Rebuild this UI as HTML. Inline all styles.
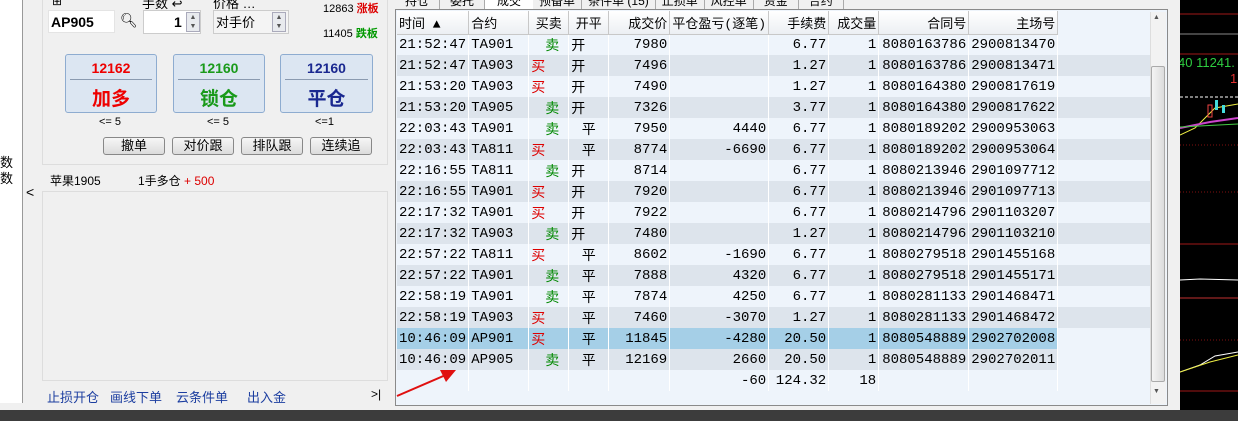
<!DOCTYPE html>
<html><head><meta charset="utf-8"><style>
*{box-sizing:border-box;margin:0;padding:0}
body{width:1238px;height:421px;overflow:hidden;background:#f0f0f0;font-family:"Liberation Sans","Noto Sans CJK SC",sans-serif;font-size:12px;position:relative;color:#000}
.a{position:absolute}
.mono{font-family:"Liberation Mono","Noto Sans CJK SC",monospace;font-size:14px}
.bb{position:absolute;background:#dce6f2;border:1px solid #8eacd0;border-radius:3px;text-align:center}
.bb .p{font-size:14px;font-weight:bold;margin-top:5px;height:19px}
.bb hr{border:0;border-top:1px solid #8a9ab0;margin:0 4px}
.bb .l{font-size:19px;font-weight:bold;margin-top:4px}
.sb{position:absolute;top:137px;height:18px;width:62px;border:1px solid #888;border-radius:3px;background:linear-gradient(#f6f6f6,#dcdcdc);text-align:center;font-size:13px;line-height:16px}
table{border-collapse:collapse;position:absolute;left:397px;top:11px;table-layout:fixed}
td,th{height:21px;padding:0 2px;white-space:nowrap;overflow:hidden;border-right:1px solid #fff}
th{font-weight:normal;font-size:13px;background:linear-gradient(#fff,#eceff3);border-right:1px solid #c8c8c8;border-bottom:1px solid #c8c8c8;height:23px}
tr.o td{background:#eef4fb}
tr.e td{background:#dde4ec}
tr.h td{background:#a5cfe7}
tr.z td{background:#eef4fb}
.r{text-align:right}.c{text-align:center}
.buy{color:#d00;font-family:"Noto Sans CJK SC",sans-serif;font-size:14px}
.sell{color:#080;font-family:"Noto Sans CJK SC",sans-serif;font-size:14px;padding-left:16px}
.k{font-family:"Noto Sans CJK SC",sans-serif;font-size:14px}
.lk{position:absolute;top:387px;color:#1c3ea0;font-size:13px}
</style></head><body>
<!-- left white strip -->
<div class="a" style="left:0;top:0;width:23px;height:403px;background:#fff;border-right:1px solid #999"></div>
<div class="a" style="left:0;top:152px;font-size:13px">数</div>
<div class="a" style="left:0;top:168px;font-size:13px">数</div>
<div class="a" style="left:26px;top:184px;font-size:14px">&lt;</div>
<!-- top box -->
<div class="a" style="left:42px;top:-2px;width:346px;height:167px;border:1px solid #ddd;background:#f0f0f0"></div>
<div class="a" style="left:52px;top:-6px;font-size:12px">⊞</div>
<div class="a" style="left:142px;top:-7px;font-size:13px">手数 ↩</div>
<div class="a" style="left:213px;top:-7px;font-size:13px">价格 …</div>
<div class="a" style="left:48px;top:10px;width:67px;height:23px;background:#fff;border:1px solid #e4e4e4;font-weight:bold;font-size:14px;padding:3px 2px">AP905</div>
<div class="a" style="left:120px;top:12px;font-size:14px">🔍︎</div>
<div class="a" style="left:143px;top:10px;width:58px;height:24px;background:#fff;border:1px solid #ccc;font-weight:bold;font-size:14px;padding:3px 0 0 30px">1<div class="a" style="left:42px;top:1px;width:14px;height:20px;background:#e8eaee;border:1px solid #aab;font-size:7px;line-height:9px;text-align:center;color:#555">▲<br>▼</div></div>
<div class="a" style="left:213px;top:10px;width:76px;height:24px;background:#f4f4f4;border:1px solid #ccc;font-size:13px;padding:1px 2px">对手价<div class="a" style="left:58px;top:1px;width:14px;height:20px;background:#e8eaee;border:1px solid #aab;font-size:7px;line-height:9px;text-align:center;color:#555">▲<br>▼</div></div>
<div class="a" style="left:323px;top:0;font-size:11px">12863 <b style="color:#d00">涨板</b></div>
<div class="a" style="left:323px;top:25px;font-size:11px">11405 <b style="color:#090">跌板</b></div>
<div class="bb" style="left:65px;top:54px;width:92px;height:59px"><div class="p" style="color:#e00">12162</div><hr><div class="l" style="color:#e00">加多</div></div>
<div class="bb" style="left:173px;top:54px;width:92px;height:59px"><div class="p" style="color:#1a9a1a">12160</div><hr><div class="l" style="color:#1a9a1a">锁仓</div></div>
<div class="bb" style="left:280px;top:54px;width:93px;height:59px"><div class="p" style="color:#1a2890">12160</div><hr><div class="l" style="color:#1a2890">平仓</div></div>
<div class="a" style="left:99px;top:116px;font-size:11px">&lt;= 5</div>
<div class="a" style="left:207px;top:116px;font-size:11px">&lt;= 5</div>
<div class="a" style="left:315px;top:116px;font-size:11px">&lt;=1</div>
<div class="sb" style="left:103px">撤单</div>
<div class="sb" style="left:172px">对价跟</div>
<div class="sb" style="left:241px">排队跟</div>
<div class="sb" style="left:310px">连续追</div>
<div class="a" style="left:50px;top:172px;font-size:12px">苹果1905</div>
<div class="a" style="left:138px;top:172px;font-size:12px">1手多仓 <span style="color:#d00">+ 500</span></div>
<div class="a" style="left:42px;top:191px;width:346px;height:190px;border:1px solid #ddd;background:#f0f0f0"></div>
<div class="lk" style="left:47px">止损开仓</div>
<div class="lk" style="left:110px">画线下单</div>
<div class="lk" style="left:176px">云条件单</div>
<div class="lk" style="left:247px">出入金</div>
<div class="a" style="left:371px;top:387px;font-size:12px">&gt;|</div>
<!-- tabs -->
<div class="a" style="left:395px;top:-8px;height:16px;width:480px;font-size:12px;white-space:nowrap">
<span style="display:inline-block;padding:0 10px;border-right:1px solid #aaa">持仓</span><span style="display:inline-block;padding:0 10px;border-right:1px solid #aaa">委托</span><span style="display:inline-block;padding:0 12px;background:#fff">成交</span><span style="display:inline-block;padding:0 6px;border-right:1px solid #aaa">预备单</span><span style="display:inline-block;padding:0 6px;border-right:1px solid #aaa">条件单 (15)</span><span style="display:inline-block;padding:0 6px;border-right:1px solid #aaa">止损单</span><span style="display:inline-block;padding:0 6px;border-right:1px solid #aaa">风控单</span><span style="display:inline-block;padding:0 10px;border-right:1px solid #aaa">资金</span><span style="display:inline-block;padding:0 10px;border-right:1px solid #aaa">合约</span></div>
<!-- table frame -->
<div class="a" style="left:395px;top:9px;width:773px;height:397px;background:#eef4fb;border:1px solid #8a8a8a"></div>
<table class="mono">
<colgroup><col style="width:71px"><col style="width:60px"><col style="width:40px"><col style="width:40px"><col style="width:61px"><col style="width:99px"><col style="width:60px"><col style="width:50px"><col style="width:90px"><col style="width:80px"><col style="width:101px"></colgroup>
<tr><th style="text-align:left">时间 ▲</th><th style="text-align:left">合约</th><th>买卖</th><th>开平</th><th class="r">成交价</th><th class="c">平仓盈亏(逐笔)</th><th class="r">手续费</th><th class="r">成交量</th><th class="r">合同号</th><th class="r">主场号</th><th style="background:#eef4fb;border:0"></th></tr>
<tr class="o"><td>21:52:47</td><td>TA901</td><td class="sell">卖</td><td class="k">开</td><td class="r">7980</td><td></td><td class="r">6.77</td><td class="r">1</td><td class="r">8080163786</td><td>2900813470</td><td></td></tr>
<tr class="e"><td>21:52:47</td><td>TA903</td><td class="buy">买</td><td class="k">开</td><td class="r">7496</td><td></td><td class="r">1.27</td><td class="r">1</td><td class="r">8080163786</td><td>2900813471</td><td></td></tr>
<tr class="o"><td>21:53:20</td><td>TA903</td><td class="buy">买</td><td class="k">开</td><td class="r">7490</td><td></td><td class="r">1.27</td><td class="r">1</td><td class="r">8080164380</td><td>2900817619</td><td></td></tr>
<tr class="e"><td>21:53:20</td><td>TA905</td><td class="sell">卖</td><td class="k">开</td><td class="r">7326</td><td></td><td class="r">3.77</td><td class="r">1</td><td class="r">8080164380</td><td>2900817622</td><td></td></tr>
<tr class="o"><td>22:03:43</td><td>TA901</td><td class="sell">卖</td><td class="k c">平</td><td class="r">7950</td><td class="r">4440</td><td class="r">6.77</td><td class="r">1</td><td class="r">8080189202</td><td>2900953063</td><td></td></tr>
<tr class="e"><td>22:03:43</td><td>TA811</td><td class="buy">买</td><td class="k c">平</td><td class="r">8774</td><td class="r">-6690</td><td class="r">6.77</td><td class="r">1</td><td class="r">8080189202</td><td>2900953064</td><td></td></tr>
<tr class="o"><td>22:16:55</td><td>TA811</td><td class="sell">卖</td><td class="k">开</td><td class="r">8714</td><td></td><td class="r">6.77</td><td class="r">1</td><td class="r">8080213946</td><td>2901097712</td><td></td></tr>
<tr class="e"><td>22:16:55</td><td>TA901</td><td class="buy">买</td><td class="k">开</td><td class="r">7920</td><td></td><td class="r">6.77</td><td class="r">1</td><td class="r">8080213946</td><td>2901097713</td><td></td></tr>
<tr class="o"><td>22:17:32</td><td>TA901</td><td class="buy">买</td><td class="k">开</td><td class="r">7922</td><td></td><td class="r">6.77</td><td class="r">1</td><td class="r">8080214796</td><td>2901103207</td><td></td></tr>
<tr class="e"><td>22:17:32</td><td>TA903</td><td class="sell">卖</td><td class="k">开</td><td class="r">7480</td><td></td><td class="r">1.27</td><td class="r">1</td><td class="r">8080214796</td><td>2901103210</td><td></td></tr>
<tr class="o"><td>22:57:22</td><td>TA811</td><td class="buy">买</td><td class="k c">平</td><td class="r">8602</td><td class="r">-1690</td><td class="r">6.77</td><td class="r">1</td><td class="r">8080279518</td><td>2901455168</td><td></td></tr>
<tr class="e"><td>22:57:22</td><td>TA901</td><td class="sell">卖</td><td class="k c">平</td><td class="r">7888</td><td class="r">4320</td><td class="r">6.77</td><td class="r">1</td><td class="r">8080279518</td><td>2901455171</td><td></td></tr>
<tr class="o"><td>22:58:19</td><td>TA901</td><td class="sell">卖</td><td class="k c">平</td><td class="r">7874</td><td class="r">4250</td><td class="r">6.77</td><td class="r">1</td><td class="r">8080281133</td><td>2901468471</td><td></td></tr>
<tr class="e"><td>22:58:19</td><td>TA903</td><td class="buy">买</td><td class="k c">平</td><td class="r">7460</td><td class="r">-3070</td><td class="r">1.27</td><td class="r">1</td><td class="r">8080281133</td><td>2901468472</td><td></td></tr>
<tr class="h"><td>10:46:09</td><td>AP901</td><td class="buy">买</td><td class="k c">平</td><td class="r">11845</td><td class="r">-4280</td><td class="r">20.50</td><td class="r">1</td><td class="r">8080548889</td><td>2902702008</td><td style="background:#eef4fb"></td></tr>
<tr class="e"><td>10:46:09</td><td>AP905</td><td class="sell">卖</td><td class="k c">平</td><td class="r">12169</td><td class="r">2660</td><td class="r">20.50</td><td class="r">1</td><td class="r">8080548889</td><td>2902702011</td><td style="background:#eef4fb"></td></tr>
<tr class="z"><td></td><td></td><td></td><td></td><td></td><td class="r">-60</td><td class="r">124.32</td><td class="r">18</td><td></td><td></td><td></td></tr>
</table>
<!-- scrollbar -->
<div class="a" style="left:1150px;top:12px;width:16px;height:392px;background:#f2f2f2;border-left:1px solid #ddd"></div>
<div class="a" style="left:1153px;top:14px;font-size:7px;color:#555">▲</div>
<div class="a" style="left:1151px;top:66px;width:14px;height:316px;background:linear-gradient(90deg,#f4f4f4,#dcdcdc);border:1px solid #aaa;border-radius:2px"></div>
<div class="a" style="left:1153px;top:388px;font-size:7px;color:#555">▼</div>
<!-- arrow -->
<svg class="a" style="left:390px;top:360px" width="80" height="45"><line x1="7" y1="36" x2="58" y2="14" stroke="#e01010" stroke-width="2"/><polygon points="66,10 50,10 56,22" fill="#e01010"/></svg>
<!-- chart -->
<div class="a" style="left:1180px;top:0;width:58px;height:410px;background:#000"></div>
<svg class="a" style="left:1180px;top:0" width="58" height="410">
<line x1="0" y1="14" x2="58" y2="14" stroke="#a01818"/><line x1="0" y1="34" x2="58" y2="34" stroke="#888"/><line x1="0" y1="54" x2="58" y2="54" stroke="#a01818"/>
<text x="-2" y="67" fill="#2ecc40" font-size="13" font-family="Liberation Sans">40 11241.</text>
<text x="50" y="83" fill="#e03030" font-size="13" font-family="Liberation Sans">1</text>
<line x1="0" y1="97" x2="58" y2="97" stroke="#fff" stroke-dasharray="3,2"/>
<line x1="0" y1="145" x2="58" y2="145" stroke="#801010" stroke-dasharray="1,2"/>
<line x1="0" y1="192" x2="58" y2="192" stroke="#801010" stroke-dasharray="1,2"/>
<polyline points="0,135 15,128 25,118 35,108 58,104" stroke="#ee4" fill="none"/>
<polyline points="0,128 30,122 58,118" stroke="#c4c" fill="none" stroke-width="2"/>
<polyline points="0,127 58,124" stroke="#4c4" fill="none"/>
<rect x="28" y="105" width="4" height="12" fill="none" stroke="#e44"/><rect x="35" y="100" width="3" height="10" fill="#4dd"/><rect x="42" y="105" width="3" height="8" fill="#4dd"/>
<line x1="0" y1="244" x2="58" y2="244" stroke="#a01818"/>
<polyline points="0,280 20,279 58,280" stroke="#fff" fill="none"/>
<line x1="0" y1="298" x2="58" y2="298" stroke="#c03030"/>
<line x1="0" y1="340" x2="58" y2="340" stroke="#801010" stroke-dasharray="1,2"/>
<polyline points="0,372 20,365 35,356 58,352" stroke="#fff" fill="none"/>
<polyline points="0,372 30,362 58,355" stroke="#ee4" fill="none"/>
<line x1="0" y1="391" x2="58" y2="391" stroke="#a01818"/>
</svg>
<div class="a" style="left:0;top:410px;width:1238px;height:11px;background:#3c3c3c"></div>
</body></html>
